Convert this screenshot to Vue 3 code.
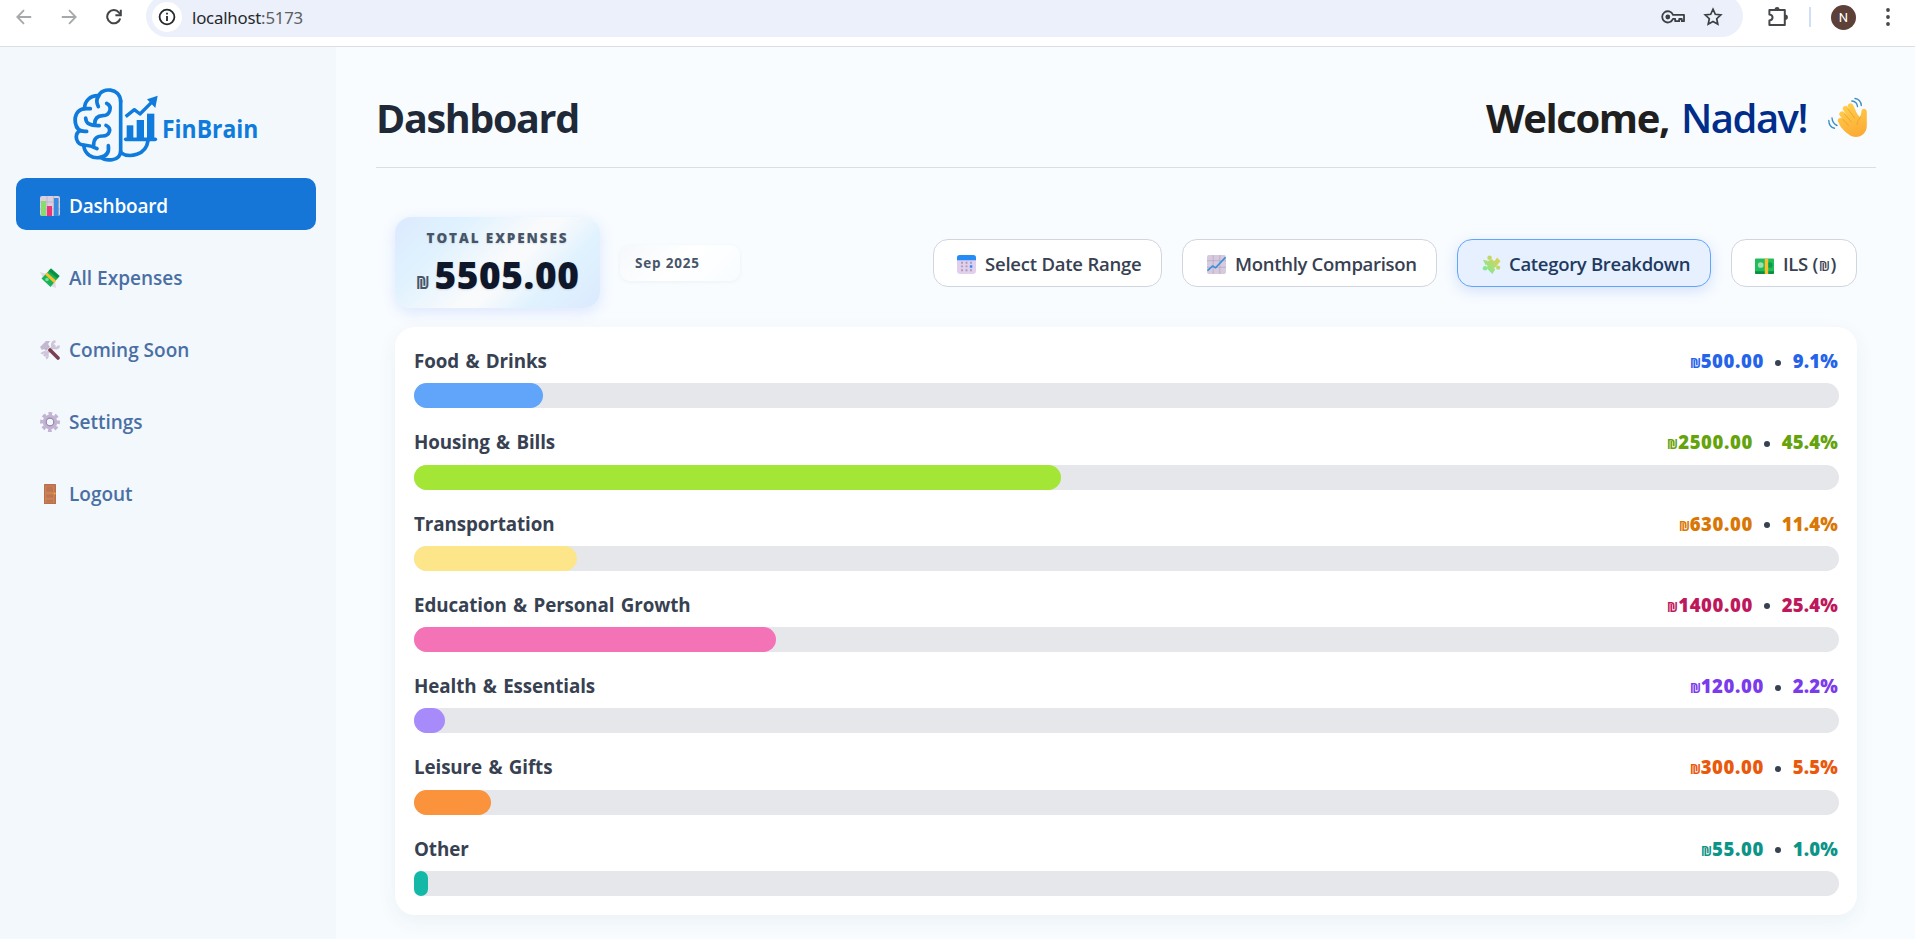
<script setup>
const rows = [
  { name: 'Food & Drinks', amount: '500.00', pct: '9.1', share: 9.08, fill: '#60a5fa', ink: '#2563eb' },
  { name: 'Housing & Bills', amount: '2500.00', pct: '45.4', share: 45.41, fill: '#a3e635', ink: '#65a30d' },
  { name: 'Transportation', amount: '630.00', pct: '11.4', share: 11.44, fill: '#fde68a', ink: '#d97706' },
  { name: 'Education & Personal Growth', amount: '1400.00', pct: '25.4', share: 25.43, fill: '#f472b6', ink: '#be185d' },
  { name: 'Health & Essentials', amount: '120.00', pct: '2.2', share: 2.18, fill: '#a78bfa', ink: '#7c3aed' },
  { name: 'Leisure & Gifts', amount: '300.00', pct: '5.5', share: 5.43, fill: '#fb923c', ink: '#ea580c' },
  { name: 'Other', amount: '55.00', pct: '1.0', share: 1.0, fill: '#14b8a6', ink: '#0d9488' },
]
</script>

<template>
  <div class="window">
    <div class="browser">
      <svg class="nav-arrow" width="16" height="16" viewBox="0 0 16 16"><path d="M15.2 8H1.5M8 1.2L1.3 8L8 14.8" /></svg>
      <svg class="nav-arrow" width="16" height="16" viewBox="0 0 16 16"><path d="M.8 8h13.7M8 1.2L14.7 8L8 14.8" /></svg>
      <svg class="reload" width="16" height="16" viewBox="0 0 16 16"><path d="M14.2 9.4A6.6 6.6 0 1 1 13 3.6L14.4 5.2" /><path d="M14.8 .8V6.2H9.4" /></svg>
      <div class="address">
        <span class="info">
          <svg width="18" height="18" viewBox="0 0 18 18"><circle cx="9" cy="9" r="7.4" fill="none" stroke="#26282b" stroke-width="1.8" /><path d="M9 8v5M9 4.8v1.8" stroke="#26282b" stroke-width="1.8" /></svg>
        </span>
        <span class="url">localhost<i>:5173</i></span>
        <svg class="key" width="24" height="14" viewBox="0 0 24 14"><path d="M12 4.8h11v6.4h-2.2V9h-2.6v2.2h-4V8.9H12A5.6 5.6 0 1 1 12 4.8z" fill="none" stroke="#3c4043" stroke-width="1.8" stroke-linejoin="round" /><circle cx="6.8" cy="7" r="2.4" fill="#3c4043" /></svg>
        <svg class="star" width="20" height="20" viewBox="0 0 20 20"><path d="M10 2.2l2.3 5.1 5.5.6-4.1 3.8 1.1 5.5L10 14.5l-4.8 2.7 1.1-5.5-4.1-3.8 5.5-.6z" fill="none" stroke="#3c4043" stroke-width="1.7" stroke-linejoin="miter" /></svg>
      </div>
      <svg class="puzzle-ext" width="22" height="22" viewBox="0 0 22 22"><path d="M2.4 4h15.4v15H2.4v-4.6c4.2-.5 4.2-5.4 0-5.9z" fill="none" stroke="#45484b" stroke-width="2" stroke-linejoin="round" /><path d="M7.5 4a2.6 2.9 0 0 1 5.2 0zM18 8.6a2.9 2.7 0 0 1 0 5.4z" fill="#45484b" /></svg>
      <span class="divider"></span>
      <span class="avatar">N</span>
      <svg class="dots" width="6" height="20" viewBox="0 0 6 20"><g fill="#45484b"><circle cx="3" cy="3" r="1.9" /><circle cx="3" cy="10" r="1.9" /><circle cx="3" cy="17" r="1.9" /></g></svg>
    </div>

    <div class="app">
      <aside class="sidebar">
        <svg class="logo" width="210" height="90" viewBox="0 0 630 270">
          <g fill="none" stroke="#0f7bdc" stroke-width="11" stroke-linecap="round" stroke-linejoin="round">
            <path d="M182 62V215" />
            <path d="M182 64C180 22 125 22 116 48C108 58 109 68 115 80" />
            <path d="M116 47C90 46 73 64 74 86" />
            <path d="M91 86H75C50 88 43 110 46 128C49 148 62 156 80 154" />
            <path d="M58 153C42 165 48 194 72 195C86 196 96 198 111 206" />
            <path d="M71 196C74 224 98 237 122 232C136 243 180 246 182 214" />
            <path d="M145 197C148 216 140 228 122 232" />
            <path d="M140 70C159 80 150 107 128 107C112 107 104 117 104 133" />
            <path d="M77 114C77 130 90 138 118 137" />
            <path d="M138 136C157 145 149 168 128 168C112 168 101 174 101 196" />
            <path d="M182 218C208 235 258 226 264 182" />
            <path d="M197 178H286" />
            <path d="M197 110L223 89L240 102L277 65" stroke-linecap="butt" stroke-width="10" />
          </g>
          <g fill="#0f7bdc"><path d="M293 47L261 58L286 84z" /><rect x="200" y="136" width="20" height="44" /><rect x="230" y="120" width="22" height="60" /><rect x="261" y="101" width="22" height="79" /></g>
          <text x="306" y="174" textLength="289" lengthAdjust="spacingAndGlyphs">FinBrain</text>
        </svg>

        <nav class="menu">
          <a class="item active">
            <svg class="emo" viewBox="0 0 20 20"><rect width="20" height="20" rx="2" fill="#d8cfe0" /><path d="M0 6h20M0 13h20M7 0v20M13.5 0v20" stroke="#b9abc6" stroke-width=".7" /><rect x="1" y="5" width="5" height="15" fill="#86dc6c" /><rect x="7" y="10" width="5" height="10" fill="#ec3675" /><rect x="14" y="2" width="4.6" height="18" fill="#3a8ee0" /></svg>
            <span>Dashboard</span>
          </a>
          <a class="item">
            <svg class="emo" viewBox="0 0 20 20"><path d="M0 4l7 2-3 6zM11 18l5 2-1-8-3 1z" fill="#dedbe3" /><path d="M11 .5L19.5 8 10.5 19 1.5 10.5z" fill="#18b358" /><path d="M11 .5L19.5 8l-2 2.5L8.500 3z" fill="#0b9145" /><circle cx="7" cy="11.5" r="1.8" fill="#7bdd9a" /><path d="M5 6.5l2-2 9 8-2 2.5z" fill="#fbc02d" /></svg>
            <span>All Expenses</span>
          </a>
          <a class="item">
            <svg class="emo" viewBox="0 0 20 20"><path d="M4 16L15 5" stroke="#cfc5d8" stroke-width="3" /><path d="M3 12.500a3.300 3.300 0 1 0 4.500 4.500" fill="none" stroke="#cfc5d8" stroke-width="2.400" transform="rotate(180 4.500 15.500)" /><path d="M15.500 1.500a3.400 3.400 0 1 0 3.500 4" fill="none" stroke="#cfc5d8" stroke-width="2.600" /><path d="M10 10l8 8" stroke="#7c3f50" stroke-width="3.600" stroke-linecap="round" /><path d="M0 7l6-6 4 0-2 3 2 3-4 4-2-2-2 1z" fill="#c3b8cf" /></svg>
            <span>Coming Soon</span>
          </a>
          <a class="item">
            <svg class="emo" viewBox="0 0 20 20"><circle cx="10" cy="10" r="8.4" fill="none" stroke="#c2b3d2" stroke-width="3" stroke-dasharray="3.7 2.9" stroke-dashoffset="1.8" /><circle cx="10" cy="10" r="5.3" fill="none" stroke="#c2b3d2" stroke-width="4" /><circle cx="10" cy="10" r="3.8" fill="none" stroke="#9b8baa" stroke-width="1.2" /></svg>
            <span>Settings</span>
          </a>
          <a class="item">
            <svg class="emo" viewBox="0 0 20 20"><rect x="4" width="12" height="20" rx=".5" fill="#b96f4b" /><rect x="5" y="1.5" width="9.5" height="17.5" fill="#cb8359" /><path d="M6.3 2.5h6.8v5.2H6.3zM6.3 10.5h6.8v3.2H6.3zM6.3 15.8h6.8v2.6H6.3z" fill="#bd7550" /><circle cx="14.7" cy="9.6" r="1" fill="#fbb034" /></svg>
            <span>Logout</span>
          </a>
        </nav>
      </aside>

      <main class="main">
        <header class="header">
          <h1>Dashboard</h1>
          <div class="welcome">
            <strong>Welcome,</strong><span class="user">Nadav!</span>
            <svg width="40" height="41" viewBox="0 0 40 41">
              <defs><linearGradient id="skin" gradientUnits="userSpaceOnUse" x1="16" y1="8" x2="28" y2="40"><stop offset="0" stop-color="#ffcf4e" /><stop offset="1" stop-color="#fcaa33" /></linearGradient></defs>
              <g fill="none" stroke="url(#skin)" stroke-width="5.400" stroke-linecap="round"><path d="M22.500 9l6 13" /><path d="M17.500 11.500l8 13" /><path d="M14 17l9 11" /><path d="M12.500 23.500l8 8" /></g>
              <path d="M14 28L19 18L27 15L32 20C32.500 18 33.300 17 33.400 14.500C33.500 10.800 38.700 11 38.800 14.700V29C38.800 38 29 43 21.500 38C17 35 12 30 10.500 25.500z" fill="url(#skin)" />
              <path d="M20 12l6.500 9M16.500 17l7 8M14.500 22l6 6.500M32.500 20c-1.500 2.500-3.500 4.500-3.500 7.500" fill="none" stroke="#ec9c2a" stroke-width=".8" stroke-linecap="round" />
              <g fill="none" stroke="#3e8ec6" stroke-width="1.400" stroke-linecap="round"><path d="M27 1.500c3.500.2 6.300 3.300 6.300 7M23.800 4c3.300.2 5.300 2.300 5.700 5.500M.8 23.500c.1 4.200 2.200 7 5.700 7.700M4 21c.3 3.700 2 6 5 7.500" /></g>
            </svg>
          </div>
        </header>

        <section class="content">
          <div class="toolbar">
            <div class="total">
              <div class="total-label">TOTAL EXPENSES</div>
              <div class="total-value"><small>₪</small><b>5505.00</b></div>
            </div>
            <div class="period">Sep 2025</div>
            <div class="buttons">
              <button class="btn date">
                <svg class="emo" viewBox="0 0 20 20"><rect width="20" height="20" rx="3.500" fill="#e0d0ee" /><path d="M0 5.500V3Q0 0 3 0H17Q20 0 20 3V5.500z" fill="#258bf5" /><g fill="#aa9cb8"><path d="M4.300 7.200h2v2h-2zM9 7.200h2v2H9zM13.700 7.200h2v2h-2zM4.300 11h2v2h-2zM9 11h2v2H9zM4.300 15h2v2h-2zM9 15h2v2H9zM13.700 15h2v2h-2z" /></g><path d="M13.500 10.800h2.600v2.600h-2.600z" fill="#258bf5" /></svg>
                <span>Select Date Range</span>
              </button>
              <button class="btn month">
                <svg class="emo" viewBox="0 0 20 20"><rect width="20" height="20" rx="2" fill="#d6cadf" /><path d="M0 6h20M0 13h20M6.500 0v20M13.500 0v20" stroke="#b7a6c4" stroke-width=".8" /><path d="M.5 16.500L6 11.500l3 2L19.500 2.500" fill="none" stroke="#348fd8" stroke-width="1.700" /></svg>
                <span>Monthly Comparison</span>
              </button>
              <button class="btn cat">
                <svg class="emo" viewBox="0 0 20 20"><defs><linearGradient id="pz" gradientUnits="userSpaceOnUse" x1="18" y1="2" x2="3" y2="18"><stop offset="0" stop-color="#e6cf4a" /><stop offset="1" stop-color="#7bea98" /></linearGradient></defs><g fill="url(#pz)"><path d="M3 8L10.500 4.500L16 11.500L9 16z" /><circle cx="8" cy="2.800" r="2.400" /><circle cx="3.200" cy="14" r="2.400" /><path d="M8 3l5 3.500 3-4 3.500 4-4 4.500zM4 13l5-2 5 4-3 5-3-3z" /><circle cx="17" cy="13.300" r="2.200" /><path d="M1 5l5 1-2 5z" /></g></svg>
                <span>Category Breakdown</span>
              </button>
              <button class="btn ils">
                <svg class="emo" viewBox="0 0 20 20"><rect y="4" width="20" height="16" rx=".8" fill="#0d8f42" /><rect y="4" width="20" height="13" rx=".8" fill="#1fbe5b" /><circle cx="6" cy="10.500" r="3" fill="#a4ddb2" /><circle cx="15.500" cy="10.500" r="3" fill="#0f9a48" /><path d="M10.300 4h3.600v16h-3.600z" fill="#fbc02d" /></svg>
                <span>ILS (<em>₪</em>)</span>
              </button>
            </div>
          </div>

          <div class="panel">
            <div v-for="r in rows" :key="r.name" class="row">
              <div class="row-head">
                <span class="name">{{ r.name }}</span>
                <span class="figures">
                  <span class="amount" :style="{ color: r.ink }"><em>₪</em>{{ r.amount }}</span>
                  <span class="bullet"></span>
                  <span :style="{ color: r.ink }">{{ r.pct }}%</span>
                </span>
              </div>
              <div class="track"><div class="fill" :style="{ width: r.share + '%', background: r.fill }"></div></div>
            </div>
          </div>
        </section>
      </main>
    </div>
  </div>
</template>

<style>
body { background: #f8fcff; overflow: hidden; }
</style>

<style scoped>
* { box-sizing: border-box; }
.window { width: 1915px; height: 939px; overflow: hidden; display: flex; flex-direction: column; font-family: "Open Sans", "Noto Sans", sans-serif; }
.browser { height: 47px; flex: none; background: #fff; border-bottom: 1px solid #dcdfe2; display: flex; align-items: center; padding: 0 0 12px 16px; }
.nav-arrow { margin-right: 29px; fill: none; stroke: #a6a8aa; stroke-width: 1.8; }
.reload { fill: none; stroke: #414447; stroke-width: 2; }
.address { margin: -3px 0 0 24px; width: 1597px; height: 42px; border-radius: 21px; background: #ecf0fa; display: flex; align-items: center; padding: 3px 20px 0 6px; }
.info { width: 30px; height: 30px; border-radius: 50%; background: #fff; display: flex; align-items: center; justify-content: center; }
.url { margin: 1px 0 0 10px; font-size: 16.8px; color: #26282b; letter-spacing: -0.2px; line-height: 22px; font-family: "Noto Sans", sans-serif; }
.url i { font-style: normal; color: #5c5f63; }
.key { margin-left: auto; }
.star { margin-left: 18px; }
.puzzle-ext { margin-left: 24px; }
.divider { width: 2px; height: 20px; background: #cfdff8; margin-left: 20px; }
.avatar { width: 25px; height: 25px; border-radius: 50%; background: #5d4037; color: #fff; font: 13px/25px Roboto, sans-serif; text-align: center; margin-left: 20px; }
.dots { margin-left: 29px; }

.app { flex: 1; display: flex; min-height: 0; }
.sidebar { width: 336px; background: #f3f8fc; padding: 33px 20px 0 16px; display: flex; flex-direction: column; }
.logo { margin-left: 44px; flex: none; }
.logo text { font: 700 77px "Open Sans", sans-serif; fill: #0f7bdc; }
.menu { margin-top: 8px; display: flex; flex-direction: column; gap: 20px; }
.item { height: 52px; border-radius: 10px; display: flex; align-items: center; padding: 3px 0 0 24px; gap: 9px; font-size: 19px; font-weight: 600; color: #4a6fa5; letter-spacing: 0; line-height: 26px; }
.item.active { background: #1676d8; color: #fff; letter-spacing: -0.2px; }
.emo { width: 20px; height: 20px; flex: none; }

.main { flex: 1; padding: 0 39px 0 40px; }
.header { height: 121px; border-bottom: 1px solid #d9dee3; display: flex; align-items: center; justify-content: space-between; padding-top: 21px; }
h1 { margin: 0; font-size: 39.5px; font-weight: 700; color: #1f2937; letter-spacing: -1.35px; line-height: 54px; }
.welcome { display: flex; align-items: center; font-size: 40px; line-height: 54px; padding-right: 8px; }
.welcome strong { color: #1f1f1f; font-weight: 700; letter-spacing: -1.4px; }
.user { color: #002d8a; font-weight: 600; margin: 0 21px 0 12px; letter-spacing: -1.5px; }

.content { padding: 49px 19px 0 19px; }
.toolbar { display: flex; align-items: center; height: 91px; }
.total { width: 205px; height: 91px; border-radius: 16px; background: linear-gradient(135deg, #dbeafe 0%, #e0f2fe 25%, #f8fafc 50%, #f8fafc 58%, #e0f2fe 75%, #dbeafe 100%); box-shadow: 0 4px 14px rgba(80, 120, 240, .16); padding-top: 11px; text-align: center; }
.total-label { font-size: 13.5px; font-weight: 800; letter-spacing: 1.9px; color: #475569; line-height: 20px; text-shadow: 0 1px 2px rgba(0, 0, 0, .1); }
.total-value { display: flex; justify-content: center; align-items: baseline; gap: 6px; line-height: 54px; color: #0f172a; height: 54px; }
.total-value small { font-size: 18px; font-weight: 700; color: #475569; width: 13px; transform: scaleX(.82); transform-origin: 0 50%; }
.total-value b { font-size: 37px; font-weight: 800; letter-spacing: 0.6px; text-shadow: 0 1px 2px rgba(0, 0, 0, .12); }
.period { margin-left: 20px; margin-top: 1px; width: 120px; height: 36px; border-radius: 10px; padding-left: 15px; font-size: 13.5px; font-weight: 700; color: #475569; line-height: 36px; background: linear-gradient(135deg, #f5f8fc, #fff 50%, #f8fcff); box-shadow: 0 1px 4px rgba(30, 60, 100, .06); letter-spacing: .8px; }
.buttons { margin-left: auto; display: flex; gap: 20px; }
.btn { height: 48px; border: 1px solid #d1d5df; border-radius: 15px; background: #fff; display: flex; align-items: center; gap: 9px; padding: 3px 0 0 22px; font-family: inherit; font-size: 18.5px; font-weight: 600; color: #374151; line-height: 26px; letter-spacing: -0.3px; white-space: nowrap; }
.btn .emo { width: 19px; height: 19px; }
.date { width: 229px; padding-left: 23px; letter-spacing: -0.22px; }
.month { width: 255px; padding-left: 24px; }
.cat { width: 254px; padding-left: 24px; gap: 8px; background: #e7f0ff; border-color: #60a5fa; color: #1e3a5f; box-shadow: 0 4px 14px rgba(60, 100, 220, .18); }
.ils { width: 126px; padding-left: 23px; gap: 9px; }
em { display: inline-block; font-style: normal; transform: scaleX(.85); transform-origin: 100% 50%; }
.btn em { font-size: 15px; font-weight: 600; transform-origin: 50% 50%; }

.panel { margin-top: 19px; height: 588px; background: #fff; border-radius: 20px; box-shadow: 0 6px 20px rgba(30, 60, 90, .06); padding: 19px 18px 19px 19px; display: flex; flex-direction: column; justify-content: space-between; }
.row-head { height: 37.3px; display: flex; justify-content: space-between; align-items: flex-start; line-height: 30px; }
.name { font-size: 18.8px; font-weight: 700; color: #374151; letter-spacing: -0.1px; word-spacing: 1.6px; }
.figures { display: flex; align-items: center; font-size: 18.5px; font-weight: 800; letter-spacing: 0.15px; padding-right: 1px; line-height: 30px; }
.amount { letter-spacing: .6px; }
.figures em { font-size: 14px; font-weight: 700; letter-spacing: 0; line-height: 18px; }
.bullet { width: 6px; height: 6px; border-radius: 50%; background: #374151; margin: 3px 12px 0 11px; }
.track { height: 25px; border-radius: 12.5px; background: #e5e7eb; }
.fill { height: 25px; border-radius: 12.5px; }
</style>
